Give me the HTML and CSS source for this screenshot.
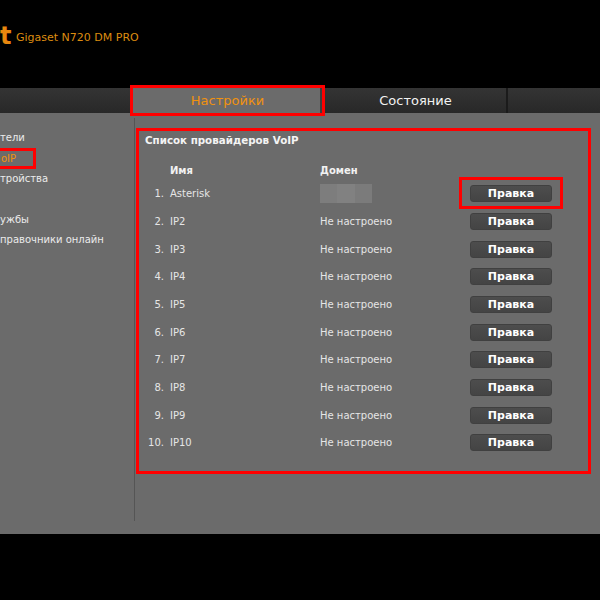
FILE: index.html
```html
<!DOCTYPE html>
<html lang="ru">
<head>
<meta charset="utf-8">
<title>Gigaset N720 DM PRO</title>
<link rel="stylesheet" href="styles.css">
</head>
<body>
<div class="header">
  <span class="logo">t</span>
  <span class="model">Gigaset N720 DM PRO</span>
</div>
<div class="tabs">
  <div class="tab tab-first"></div>
  <div class="tab tab-active">Настройки</div>
  <div class="tab tab-status">Состояние</div>
  <div class="tab tab-last"></div>
</div>
<div class="content">
  <div class="sidebar">
    <div class="nav-item">тели</div>
    <div class="nav-item nav-active"><span class="nav-mark">oIP</span></div>
    <div class="nav-item">тройства</div>
    <div class="nav-item"></div>
    <div class="nav-item">ужбы</div>
    <div class="nav-item">правочники онлайн</div>
  </div>
  <div class="main">
    <div class="panel">
      <div class="panel-title">Список провайдеров VoIP</div>
      <div class="row head">
        <span class="num"></span><span class="name">Имя</span><span class="domain">Домен</span><span></span>
      </div>
      <div class="row"><span class="num">1.</span><span class="name">Asterisk</span><span class="domain"><span class="blur"><i></i><i></i><i></i></span></span><span class="btn-wrap"><button class="btn btn-marked">Правка</button></span></div>
      <div class="row"><span class="num">2.</span><span class="name">IP2</span><span class="domain">Не настроено</span><span class="btn-wrap"><button class="btn">Правка</button></span></div>
      <div class="row"><span class="num">3.</span><span class="name">IP3</span><span class="domain">Не настроено</span><span class="btn-wrap"><button class="btn">Правка</button></span></div>
      <div class="row"><span class="num">4.</span><span class="name">IP4</span><span class="domain">Не настроено</span><span class="btn-wrap"><button class="btn">Правка</button></span></div>
      <div class="row"><span class="num">5.</span><span class="name">IP5</span><span class="domain">Не настроено</span><span class="btn-wrap"><button class="btn">Правка</button></span></div>
      <div class="row"><span class="num">6.</span><span class="name">IP6</span><span class="domain">Не настроено</span><span class="btn-wrap"><button class="btn">Правка</button></span></div>
      <div class="row"><span class="num">7.</span><span class="name">IP7</span><span class="domain">Не настроено</span><span class="btn-wrap"><button class="btn">Правка</button></span></div>
      <div class="row"><span class="num">8.</span><span class="name">IP8</span><span class="domain">Не настроено</span><span class="btn-wrap"><button class="btn">Правка</button></span></div>
      <div class="row"><span class="num">9.</span><span class="name">IP9</span><span class="domain">Не настроено</span><span class="btn-wrap"><button class="btn">Правка</button></span></div>
      <div class="row"><span class="num">10.</span><span class="name">IP10</span><span class="domain">Не настроено</span><span class="btn-wrap"><button class="btn">Правка</button></span></div>
    </div>
  </div>
</div>
</body>
</html>
```
FILE: styles.css
```css
* { box-sizing: border-box; }
html, body { margin: 0; padding: 0; }
body {
  background: #000;
  width: 600px;
  height: 600px;
  overflow: hidden;
  font-family: "DejaVu Sans", Verdana, sans-serif;
  font-size: 10px;
  color: #e6e6e6;
}
.header {
  height: 88px;
  display: flex;
  align-items: center;
  padding-bottom: 17px;
}
.logo {
  font-family: "DejaVu Sans", sans-serif;
  font-weight: bold;
  font-size: 24px;
  color: #e8870e;
  margin-left: 0;
  width: 10px;
  line-height: 26px;
}
.model {
  margin-left: 6px;
  font-size: 11px;
  color: #dc8c10;
  padding-top: 3px;
}
.tabs {
  height: 25px;
  display: flex;
  background: #1b1b1b;
}
.tab {
  height: 25px;
  line-height: 25px;
  text-align: center;
  font-size: 13px;
  background: linear-gradient(#343434, #282828);
}
.tab-first { width: 131px; margin-right: 2px; }
.tab-active {
  width: 189px;
  background: #6b6b6b;
  color: #f0920f;
  outline: 3px solid #f00;
  position: relative;
  z-index: 1;
  box-shadow: inset -2px 0 0 #3e3e3e;
}
.tab-status { width: 181px; margin-left: 3px; margin-right: 2px; color: #f2f2f2; }
.tab-last { flex: 1; }
.content {
  height: 421px;
  background: #6b6b6b;
  display: flex;
}
.sidebar {
  width: 135px;
  margin-top: 5px;
  margin-bottom: 13px;
  border-right: 1px solid #555;
  padding-top: 10px;
}
.nav-item {
  height: 20.4px;
  line-height: 20.4px;
  white-space: nowrap;
  color: #ececec;
}
.nav-active { color: #f0920f; }
.nav-mark {
  display: inline-block;
  line-height: 15px;
  width: 36px;
  border: 3px solid #f00;
  border-left: none;
  padding-left: 1px;
}
.main { flex: 1; padding-top: 15px; padding-left: 1px; }
.panel {
  width: 455px;
  border: 3px solid #f00;
  padding: 2px 0 14px 0;
}
.panel-title {
  font-weight: bold;
  font-size: 10.3px;
  color: #f4f4f4;
  line-height: 14px;
  padding-left: 6px;
}
.row {
  display: grid;
  grid-template-columns: 25px 156px 150px 82px;
  align-items: center;
  height: 27.67px;
}
.row.head {
  height: 20px;
  margin-top: 13px;
  font-weight: bold;
  color: #f2f2f2;
}
.num { text-align: right; }
.name { padding-left: 6px; }
.blur {
  display: flex;
  width: 52px;
  height: 19px;
  background: #787878;
}
.blur i { display: block; flex: 1; }
.blur i:nth-child(1) { background: #7d7d7d; }
.blur i:nth-child(2) { background: #818181; }
.blur i:nth-child(3) { background: #7b7b7b; }
.btn-wrap { position: relative; display: block; height: 17px; }
.btn {
  display: block;
  width: 82px;
  height: 17px;
  padding: 0;
  border: 1px solid #404040;
  border-radius: 3px;
  background: linear-gradient(#4d4d4d, #444);
  color: #fff;
  font-family: "DejaVu Sans", Verdana, sans-serif;
  font-weight: bold;
  font-size: 11px;
  line-height: 15px;
}
.btn-marked::after {
  content: "";
  position: absolute;
  top: -8px;
  bottom: -7px;
  left: -11px;
  right: -11px;
  border: 3px solid #f00;
}
```
